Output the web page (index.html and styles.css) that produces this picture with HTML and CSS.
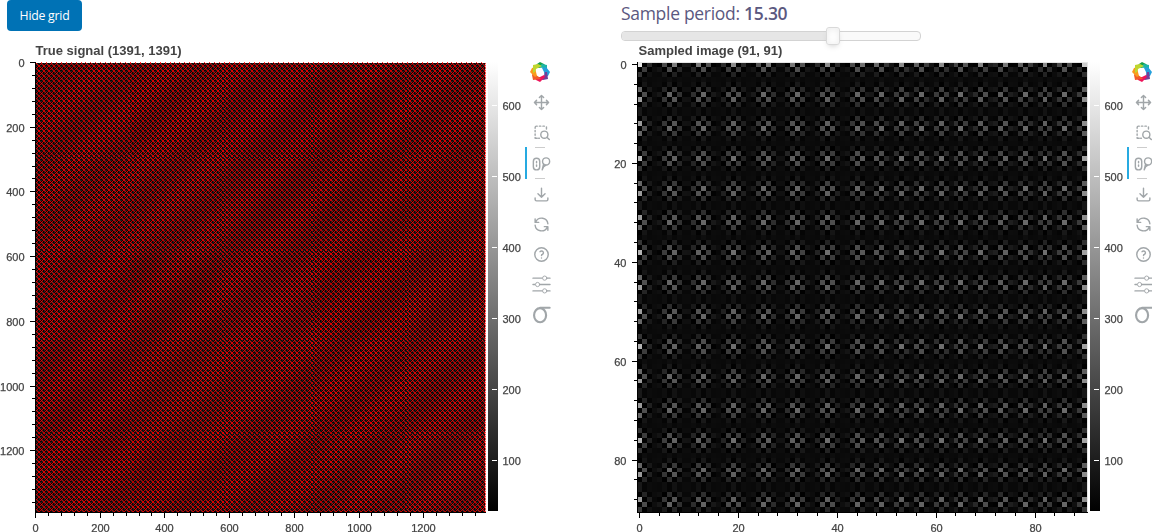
FILE: index.html
```html
<!DOCTYPE html>
<html lang="en">
<head>
<meta charset="utf-8">
<title>Sampling explorer</title>
<link rel="stylesheet" href="styles.css">
</head>
<body>
<svg class="defs" width="0" height="0">
  <defs>
    <linearGradient id="greys" x1="0" y1="0" x2="0" y2="1"><stop offset="0" stop-color="#fff"/><stop offset="1" stop-color="#000"/></linearGradient>
    <symbol id="logo" viewBox="-10 -10 20 20">
      <path fill="#14a04a" d="M-3-8 0-10 4-8 6-6-1-4-5-5z"/>
      <path fill="#1cb5a8" d="M2-8 7-7 7-3 7 0 3-4-2-5z"/>
      <path fill="#25a0dc" d="M6-5 10 0 8 4 5 5 4 0 2-4z"/>
      <path fill="#733f98" d="M7 0 8 7 3 8-1 7 4 4 5 0z"/>
      <path fill="#ee145b" d="M5 5 0 10-4 8-6 5 0 5 4 3z"/>
      <path fill="#f15a29" d="M1 7-7 8-8 3-6-1-4 3-1 5z"/>
      <path fill="#fa9a1c" d="M-5 5-10 0-8-4-5-5-4 0-3 4z"/>
      <path fill="#bfd62f" d="M-7 1-7-7-2-8 2-6-4-3-5 0z"/>
    </symbol>
    <symbol id="pan" viewBox="0 0 24 24"><path d="M12 2v20M2 12h20M9 5l3-3 3 3M9 19l3 3 3-3M5 9l-3 3 3 3M19 9l3 3-3 3"/></symbol>
    <symbol id="box-zoom" viewBox="0 0 24 24"><path d="M3 6V5a2 2 0 0 1 2-2h1M9 3h2M14 3h2M19 4v3M3 9v2M3 14v2M3 19v1h3M8 20h1"/><circle cx="16" cy="15" r="5"/><path d="M20 19l3 3"/></symbol>
    <symbol id="wheel" viewBox="0 0 24 24" overflow="visible"><rect x="0.500" y="4.500" width="9" height="16.500" rx="4.500"/><path d="M5 9v2M5 14v2"/><circle cx="18.500" cy="9" r="5"/><path d="M15 12.500l-2 8.500M18 14.500c-2 .5-4 3-5 6.500"/></symbol>
    <symbol id="save" viewBox="0 0 24 24"><path d="M3 17v2a2 2 0 0 0 2 2h14a2 2 0 0 0 2-2v-2M7 11l5 5 5-5M12 3v13"/></symbol>
    <symbol id="reset" viewBox="0 0 24 24"><path d="M21 11A9 9 0 0 0 4 8M3 4v5h5M3 13a9 9 0 0 0 17 3M21 20v-5h-5"/></symbol>
    <symbol id="help" viewBox="0 0 24 24"><circle cx="12" cy="12" r="9.500"/><path d="M12 17v.1M12 13.500a1.500 1.500 0 0 1 1-1.500 2.600 2.600 0 1 0-3-4"/></symbol>
    <symbol id="sliders" viewBox="0 0 24 24" overflow="visible"><path d="M0 3h13M20 3h4M0 12h3M10 12h14M0 21h13M20 21h4"/><g class="knob"><circle cx="16.500" cy="3" r="3"/><circle cx="6.500" cy="12" r="3"/><circle cx="16.500" cy="21" r="3"/></g></symbol>
    <symbol id="sigma" viewBox="0 0 24 24" overflow="visible"><ellipse class="bold" cx="10" cy="13" rx="8.500" ry="10"/><path class="bold" d="M10 2.500h13.500"/></symbol>
  </defs>
</svg>
<main class="board">
  <section class="panel">
    <header class="controls"><button class="toggle">Hide grid</button></header>
    <div class="figure">
      <div class="plot"><canvas id="signal" width="525" height="492"></canvas><svg id="signal-axes" width="525" height="492"></svg></div>
      <nav class="toolbar">
        <svg class="logo"><use href="#logo"/></svg>
        <span class="tool"><svg><use href="#pan"/></svg></span>
        <span class="tool"><svg><use href="#box-zoom"/></svg></span>
        <span class="tool active"><svg><use href="#wheel"/></svg></span>
        <span class="tool"><svg><use href="#save"/></svg></span>
        <span class="tool"><svg><use href="#reset"/></svg></span>
        <span class="tool"><svg><use href="#help"/></svg></span>
        <span class="tool"><svg><use href="#sliders"/></svg></span>
        <span class="tool"><svg><use href="#sigma"/></svg></span>
      </nav>
    </div>
  </section>
  <section class="panel">
    <header class="controls slider-box">
      <div class="label">Sample period: <b>15.30</b></div>
      <div class="track"><div class="filled"></div><div class="handle"></div></div>
    </header>
    <div class="figure">
      <div class="plot"><canvas id="sampled" width="525" height="492"></canvas><svg id="sampled-axes" width="525" height="492"></svg></div>
      <nav class="toolbar">
        <svg class="logo"><use href="#logo"/></svg>
        <span class="tool"><svg><use href="#pan"/></svg></span>
        <span class="tool"><svg><use href="#box-zoom"/></svg></span>
        <span class="tool active"><svg><use href="#wheel"/></svg></span>
        <span class="tool"><svg><use href="#save"/></svg></span>
        <span class="tool"><svg><use href="#reset"/></svg></span>
        <span class="tool"><svg><use href="#help"/></svg></span>
        <span class="tool"><svg><use href="#sliders"/></svg></span>
        <span class="tool"><svg><use href="#sigma"/></svg></span>
      </nav>
    </div>
  </section>
</main>
<script src="plots.js"></script>
</body>
</html>
```
FILE: styles.css
```css
body { margin: 0; background: #fff; overflow: hidden; font-family: "Liberation Sans", Arial, sans-serif; }
.defs { display: block; }
.board { display: grid; grid-template-columns: 602px 602px; height: 532px; overflow: hidden; }
.controls { height: 40px; box-sizing: border-box; }
.toggle { display: block; width: 75px; height: 31px; margin-left: 7px; padding: 0; border: 0; border-radius: 4px; background: #0072b5; color: #fff; font: 12.3px "Open Sans", sans-serif; letter-spacing: -0.25px; }
.slider-box { padding-left: 19px; }
.label { height: 31px; color: #5b5880; font: 17.5px/26px "Open Sans", sans-serif; letter-spacing: -0.3px; white-space: nowrap; }
.label b { font-weight: 600; }
.track { display: flex; align-items: center; box-sizing: border-box; width: 300px; height: 10px; border: 1px solid #d3d3d3; border-radius: 4px; background: #fafafa; }
.filled { width: 204px; height: 8px; border-radius: 3px 0 0 3px; background: #e6e6e6; }
.handle { box-sizing: border-box; width: 14px; height: 18px; border: 1px solid #d9d9d9; border-radius: 3px; background: #fff; box-shadow: inset 0 0 1px #fff, inset 0 1px 7px #ebebeb, 0 3px 6px -3px #bbb; z-index: 1; }
.figure { display: flex; }
.plot { display: grid; width: 525px; height: 492px; }
.plot > * { grid-area: 1 / 1; }
.plot svg { display: block; z-index: 1; }
.plot text { font-size: 11px; fill: #444; stroke: #444; stroke-width: 0.25px; }
.plot .title { font-size: 13px; font-weight: bold; stroke: none; }
.toolbar { display: flex; flex-direction: column; width: 32px; padding-top: 22px; }
.logo { width: 20px; height: 20px; margin: 0 0 5px 5px; flex: none; }
.tool { display: flex; align-items: center; box-sizing: border-box; width: 32px; height: 30px; padding-left: 8px; flex: none; }
.tool svg { width: 17px; height: 17px; overflow: visible; fill: none; stroke: #a1a6a9; stroke-width: 2; stroke-linecap: round; stroke-linejoin: round; }
.tool.active { height: 32px; padding-left: 6px; border-left: 2px solid #26aae1; background: linear-gradient(#ccc, #ccc) 8px 0 / 10px 1px no-repeat, linear-gradient(#ccc, #ccc) 8px 31px / 10px 1px no-repeat; }
.knob { fill: #fff; stroke-width: 1.3; }
.bold { stroke-width: 3; }
```
FILE: plots.js
```js
const NS = 'http://www.w3.org/2000/svg';

function add(svg, tag, attrs, text) {
  const el = document.createElementNS(NS, tag);
  for (const key in attrs) el.setAttribute(key, attrs[key]);
  if (text !== undefined) el.textContent = text;
  svg.appendChild(el);
}

function axes(id, o) {
  const svg = document.getElementById(id);
  const line = (x, y, w, h, fill = '#000') => add(svg, 'rect', { x, y, width: w, height: h, fill });
  add(svg, 'text', { x: o.titleX, y: 15, class: 'title' }, o.title);
  line(35, 22, 1, 451);
  line(35, 472, 451, 1);
  for (let n = 0; n < o.count; n++) {
    const major = n % 5 === 0;
    const x = Math.round(o.x0 + n * o.step);
    const y = Math.round(o.y0 + n * o.step);
    line(x, 472, 1, major ? 6 : 4);
    line(major ? 30 : 32, y, major ? 6 : 4, 1);
    if (major) {
      const value = n / 5 * o.unit;
      add(svg, 'text', { x: x + .5, y: 492, 'text-anchor': 'middle' }, value);
      add(svg, 'text', { x: 24.500, y: y + 4.500, 'text-anchor': 'end' }, value);
    }
  }
  add(svg, 'rect', { x: 488, y: 22, width: 10, height: 449, fill: 'url(#greys)' });
  for (let v = 100; v <= 600; v += 100) {
    const y = Math.round(420 - (v - 100) * .71);
    line(492, y, 5, 1, '#fff');
    add(svg, 'text', { x: 502.500, y: y + 4.500 }, v);
  }
}

axes('signal-axes', { title: 'True signal (1391, 1391)', titleX: 35.500, x0: 35, y0: 22, step: 12.940, count: 35, unit: 200 });
axes('sampled-axes', { title: 'Sampled image (91, 91)', titleX: 36.500, x0: 37, y0: 24, step: 19.780, count: 23, unit: 20 });

// Full-resolution signal with the sampling lattice over it.
const signal = document.getElementById('signal').getContext('2d');
const pixels = signal.createImageData(450, 450);
const pitch = 4.946;
const local = v => Math.floor(v - Math.floor(v / pitch) * pitch);
for (let y = 0; y < 450; y++) {
  for (let x = 0; x < 450; x++) {
    const u = local(x), v = local(y);
    const odd = (u + v) % 2;
    let c = odd ? [42, 30, 30] : [10, 3, 3];
    if ((u + v) % 5 === 0 || u === v) {
      const r = u === 0 && v === 0 ? 245 : 205 + 20 * Math.cos((x + y) / 11);
      c = [r, 0, 0];
    }
    pixels.data.set([c[0], c[1], c[2], 255], (y * 450 + x) * 4);
  }
}
signal.putImageData(pixels, 36, 23);
for (let n = 1; n < 91; n++) {
  const p = Math.round(n * pitch);
  signal.fillStyle = '#f33';
  signal.fillRect(36 + p, 22, 1, 1);
}
for (let y = 0; y < 450; y++) {
  signal.fillStyle = local(y) % 2 ? '#fbb' : '#f44';
  signal.fillRect(485, 23 + y, 1, 1);
}

// Sampled image: alternating cells modulated by aliasing peaks.
const xPeaks = [0, 6.400, 12.670, 19, 25.300, 31.700, 38, 44.400, 48.700, 53, 56.800, 61, 65.100, 69.300, 73.500, 77.800, 82, 86, 90];
const yPeaks = Array.from({ length: 15 }, (_, n) => n * 6.333);
function wave(i, peaks) {
  let k = 0;
  peaks.forEach((p, n) => { if (Math.abs(i - p) < Math.abs(i - peaks[k])) k = n; });
  const d = i - peaks[k];
  const gap = d > 0 ? (peaks[k + 1] ?? 90) - peaks[k] : peaks[k] - (peaks[k - 1] ?? 0);
  const spread = gap > 5 ? 2.900 : 1.500;
  return Math.exp(-d * d / spread) * ((i + k) % 2 ? -1 : 1);
}
const sampled = document.getElementById('sampled').getContext('2d');
for (let j = 0; j < 91; j++) {
  for (let i = 0; i < 91; i++) {
    let amp = wave(i, xPeaks) * wave(j, yPeaks);
    if (i === 0) amp *= 1.700;
    if (i === 90) amp *= 1.500;
    if (j === 0) amp *= 1.300;
    const v = Math.max(0, Math.min(255, Math.round(10 + amp * (amp < 0 ? 60 : 100))));
    const x = Math.max(36, Math.round(35.060 + i * 4.945));
    const y = Math.max(23, Math.round(22.060 + j * 4.945));
    sampled.fillStyle = `rgb(${v},${v},${v})`;
    sampled.fillRect(x, y, Math.min(486, Math.round(40.005 + i * 4.945)) - x, Math.min(472, Math.round(27.005 + j * 4.945)) - y);
  }
}
sampled.fillStyle = '#e5e5e5';
sampled.fillRect(36, 22, 450, 1);
sampled.fillRect(485, 22, 1, 450);
```
